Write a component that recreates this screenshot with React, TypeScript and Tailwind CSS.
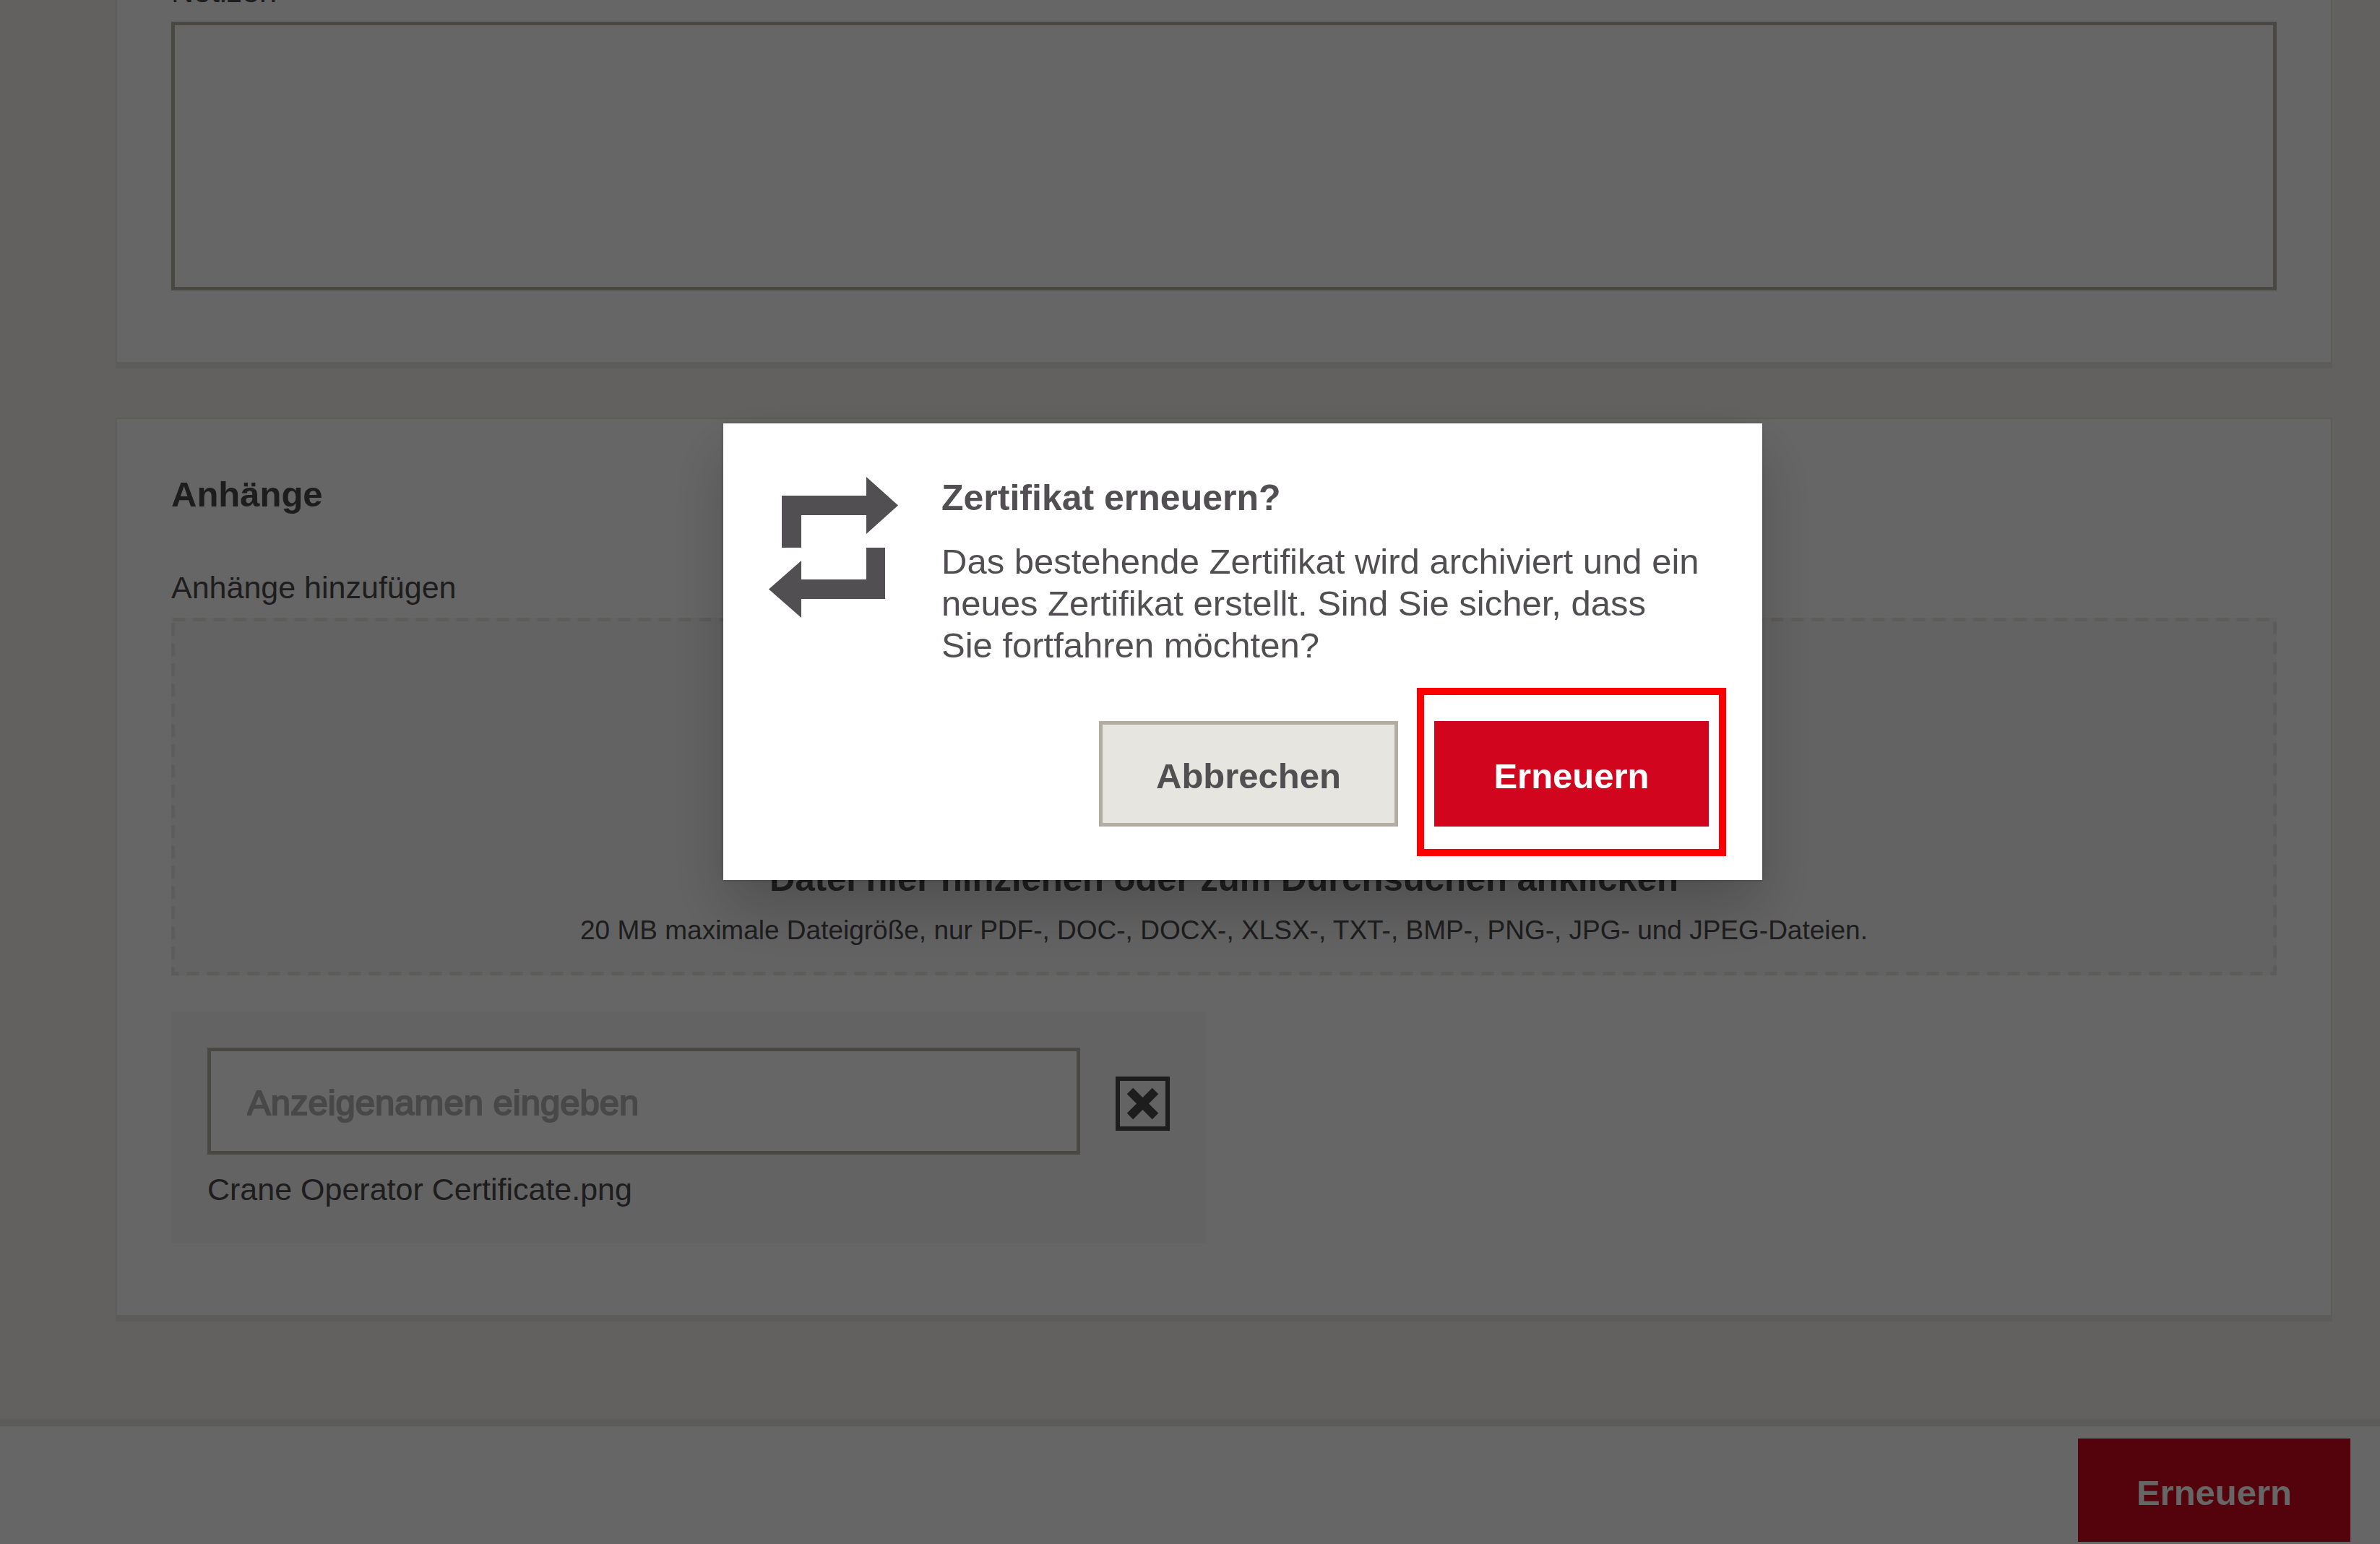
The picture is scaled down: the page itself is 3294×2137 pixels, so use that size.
import type { ReactNode } from "react";

function Card({ children, className = "" }: { children: ReactNode; className?: string }) {
  return (
    <section className={`border-2 border-b-[9px] border-[#e6e5e0] bg-white px-[75px] pb-[99px] ${className}`}>
      {children}
    </section>
  );
}

function RenewIcon() {
  return (
    <svg viewBox="0 0 180 196" className="h-[196px] w-[180px] shrink-0 fill-[#524f53]" aria-hidden="true">
      <path d="M18 26H135V0L179 39.500L135 79V53H45V98H18Z" />
      <path d="M135 98H161V169H45V195L0 155.500L45 116V142H135Z" />
    </svg>
  );
}

function RemoveIcon() {
  return (
    <svg viewBox="0 0 75 75" className="size-[75px]" aria-hidden="true">
      <rect x="3" y="3" width="69" height="69" fill="none" stroke="#4c494d" strokeWidth="6" />
      <path d="M20 20L55 55M55 20L20 55" stroke="#4c494d" strokeWidth="12" fill="none" />
    </svg>
  );
}

function DashedOutline() {
  return (
    <svg className="pointer-events-none absolute inset-0 size-full" aria-hidden="true">
      <rect
        x="2.5"
        y="2.5"
        className="h-[calc(100%-5px)] w-[calc(100%-5px)] fill-none stroke-[#e6e5e0] stroke-5 [stroke-dasharray:17_11]"
      />
    </svg>
  );
}

function RenewButton({ className }: { className: string }) {
  return (
    <button
      type="button"
      className={`bg-[#d2051e] pt-[6px] text-[49px] leading-[58px] font-bold text-white ${className}`}
    >
      Erneuern
    </button>
  );
}

export default function App() {
  return (
    <div className="flex h-screen flex-col overflow-hidden bg-[#f4f3ed] font-['Liberation_Sans',Arial,sans-serif] text-[#4c494d]">
      <main className="flex min-h-0 flex-1 flex-col gap-[68px] pr-[66px] pl-[160px]">
        <Card className="-mt-[39px]">
          <label htmlFor="notes" className="block text-[43px] leading-[50px]">
            Notizen
          </label>
          <textarea
            id="notes"
            className="mt-[17px] block h-[372px] w-full resize-none border-[5px] border-[#b7b5a8] bg-white px-[50px] py-[40px] text-[49px] outline-none"
          />
        </Card>

        <Card className="pt-[75px]">
          <h2 className="text-[49px] leading-[58px] font-bold">Anhänge</h2>
          <p id="attach-label" className="mt-[75px] text-[43px] leading-[50px]">
            Anhänge hinzufügen
          </p>
          <button
            type="button"
            aria-describedby="attach-label"
            className="relative mt-[17px] flex h-[495px] w-full flex-col items-center justify-end gap-[20px] bg-[#f7f7f7] pb-[39px]"
          >
            <DashedOutline />
            <span className="text-[49px] leading-[58px] font-bold">Datei hier hinziehen oder zum Durchsuchen anklicken</span>
            <span className="text-[37px] leading-[46px]">
              20 MB maximale Dateigröße, nur PDF-, DOC-, DOCX-, XLSX-, TXT-, BMP-, PNG-, JPG- und JPEG-Dateien.
            </span>
          </button>
          <div className="mt-[50px] w-[1432px] max-w-full bg-[#f7f7f7] p-[50px]">
            <div className="flex items-center gap-[49px]">
              <input
                id="display-name"
                type="text"
                aria-label="Anzeigenamen eingeben"
                placeholder="Anzeigenamen eingeben"
                className="h-[148px] min-w-0 flex-1 border-[5px] border-[#b7b5a8] bg-white px-[50px] pt-[4px] text-[49px] outline-none placeholder:text-[#b4b4b4] placeholder:opacity-100 placeholder:[-webkit-text-stroke:2px_#b4b4b4]"
              />
              <button type="button" aria-label="Entfernen" className="shrink-0 pt-[6px]">
                <RemoveIcon />
              </button>
            </div>
            <p className="mt-[23px] text-[43px] leading-[50px]">Crane Operator Certificate.png</p>
          </div>
        </Card>
      </main>

      <footer className="flex shrink-0 justify-end border-t-[10px] border-[#e6e5e0] bg-white pt-[17px] pr-[41px] pb-[3px]">
        <RenewButton className="h-[143px] w-[377px]" />
      </footer>

      <div className="fixed inset-0 flex items-start justify-center bg-black/60 pt-[586px] pl-[146px]">
        <div
          role="dialog"
          aria-modal="true"
          aria-labelledby="dialog-title"
          className="w-[1438px] bg-white pt-[74px] pr-[74px] pb-[74px] pl-[63px] text-[#524f53] shadow-[0_40px_80px_rgba(0,0,0,0.2),0_0_6px_rgba(0,0,0,0.2)]"
        >
          <div className="flex items-start gap-[59px]">
            <RenewIcon />
            <div className="whitespace-nowrap">
              <h1 id="dialog-title" className="text-[50px] leading-[58px] font-bold">
                Zertifikat erneuern?
              </h1>
              <p className="mt-[30px] text-[49px] leading-[58px]">
                Das bestehende Zertifikat wird archiviert und ein
                <br />
                neues Zertifikat erstellt. Sind Sie sicher, dass
                <br />
                Sie fortfahren möchten?
              </p>
            </div>
          </div>
          <div className="mt-[76px] flex justify-end gap-[50px]">
            <button
              type="button"
              className="h-[146px] w-[414px] border-[5px] border-[#b2ada0] bg-[#e6e5e0] pt-[6px] text-[49px] leading-[58px] font-bold"
            >
              Abbrechen
            </button>
            <div className="relative">
              <RenewButton className="block h-[146px] w-[380px]" />
              <span className="pointer-events-none absolute -inset-x-6 -top-[46px] -bottom-[41px] border-[10px] border-[#ff0000]" />
            </div>
          </div>
        </div>
      </div>
    </div>
  );
}
